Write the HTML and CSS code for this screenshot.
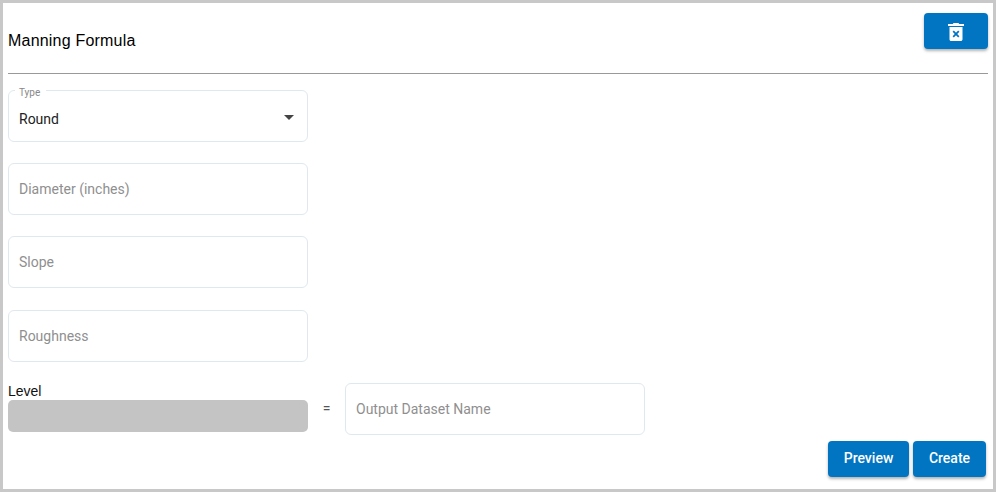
FILE: index.html
```html
<!DOCTYPE html>
<html lang="en">
<head>
<meta charset="utf-8">
<title>Manning Formula</title>
<link rel="stylesheet" href="styles.css">
</head>
<body>
<main class="frame">
  <header class="head">
    <h1 class="title">Manning Formula</h1>
    <button class="btn btn-icon" type="button" aria-label="Delete">
      <svg width="16" height="18" viewBox="0 0 16 18"><path fill="#fff" d="M5.500 0h5l.7 1H16v2H0V1h4.800zM1.500 4h13v12.200c0 1-.8 1.800-1.800 1.800H3.300c-1 0-1.800-.8-1.800-1.800z"/><path stroke="#0175c2" stroke-width="1.800" d="M5.200 8.200l5.600 5.600m0-5.600l-5.600 5.600"/></svg>
    </button>
  </header>
  <div class="form">
    <fieldset class="field select">
      <legend class="legend">Type</legend>
      <span class="value">Round</span>
      <span class="caret"></span>
    </fieldset>
    <div class="field"><span class="placeholder">Diameter (inches)</span></div>
    <div class="field"><span class="placeholder">Slope</span></div>
    <div class="field"><span class="placeholder">Roughness</span></div>
    <div class="equation">
      <div class="level">
        <label class="level-label">Level</label>
        <div class="level-box"></div>
      </div>
      <span class="equals">=</span>
      <div class="field"><span class="placeholder">Output Dataset Name</span></div>
    </div>
  </div>
  <footer class="actions">
    <button class="btn btn-preview" type="button">Preview</button>
    <button class="btn btn-create" type="button">Create</button>
  </footer>
</main>
</body>
</html>
```

FILE: styles.css
```css
* { box-sizing: border-box; }
html, body { margin: 0; height: 100%; background: #fff; overflow: hidden; }
.frame {
  width: 996px;
  height: 492px;
  border: 3px solid #c8c8c8;
  padding: 10px 5px 0;
  font-family: Roboto, sans-serif;
  display: flex;
  flex-direction: column;
}
.head {
  height: 61px;
  flex: none;
  display: flex;
  justify-content: space-between;
  align-items: flex-start;
  border-bottom: 1px solid #999;
}
.title {
  margin: 18px 0 0;
  font: 400 16px/20px "Liberation Sans", sans-serif;
  letter-spacing: .2px;
  color: #000;
}
.btn {
  border: 0;
  border-radius: 4px;
  background: #0175c2;
  color: #fff;
  font: 500 14px/34px Roboto, sans-serif;
  height: 36px;
  padding: 0 0 2px;
  box-shadow: 0 2px 3px rgba(0, 0, 0, .3);
}
.btn-icon {
  width: 64px;
  padding: 2px 0 0;
  display: flex;
  align-items: center;
  justify-content: center;
}
.form { display: flex; flex-direction: column; padding-top: 16px; }
.field {
  width: 300px;
  height: 52px;
  margin: 0 0 21.500px;
  padding: 0 10px;
  border: 1px solid #dfe8ee;
  border-radius: 6px;
  display: flex;
  align-items: center;
  font-size: 14px;
}
.select {
  position: relative;
  display: block;
  margin: -9px 0 20.600px;
  height: 61px;
  min-width: 0;
}
.legend {
  margin-left: -4px;
  padding: 6px 6px 0 4px;
  font-size: 10px;
  line-height: 12px;
  color: #888;
}
.value {
  display: block;
  margin-top: 10px;
  line-height: 20px;
  color: #222;
}
.caret {
  position: absolute;
  top: 16px;
  right: 13px;
  border-style: solid;
  border-width: 5px 5px 0;
  border-color: #444 transparent transparent;
}
.placeholder { color: #8f8f8f; }
.equation { display: flex; align-items: flex-start; margin-top: -.500px; }
.equation .field { margin: 0; }
.level { width: 300px; }
.level-label {
  display: block;
  font: 400 14px/17px "Liberation Sans", sans-serif;
  color: #111;
}
.level-box { height: 32px; border-radius: 5px; background: #c4c4c4; }
.equals {
  width: 37px;
  padding-top: 17px;
  text-align: center;
  font-size: 14px;
  line-height: 16px;
  color: #555;
}
.actions { display: flex; justify-content: flex-end; gap: 4px; padding: 6px 2px 0 0; }
.btn-preview { width: 81px; }
.btn-create { width: 73px; }
```
